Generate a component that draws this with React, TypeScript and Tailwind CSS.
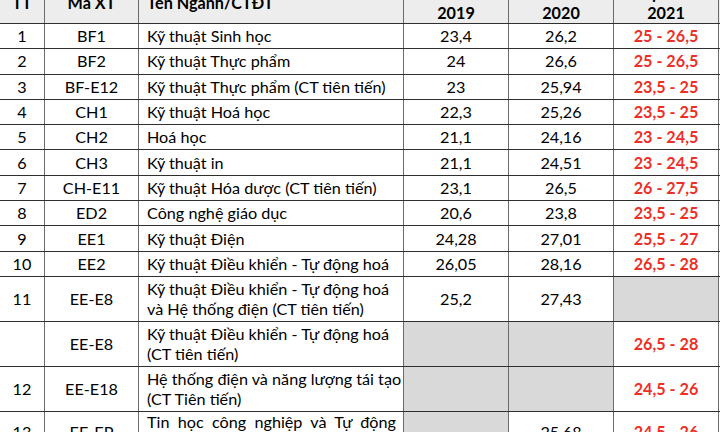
const rows = [
  { tt: "1", code: "BF1", name: ["Kỹ thuật Sinh học"], y19: "23,4", y20: "26,2", y21: "25 - 26,5" },
  { tt: "2", code: "BF2", name: ["Kỹ thuật Thực phẩm"], y19: "24", y20: "26,6", y21: "25 - 26,5" },
  { tt: "3", code: "BF-E12", name: ["Kỹ thuật Thực phẩm (CT tiên tiến)"], y19: "23", y20: "25,94", y21: "23,5 - 25" },
  { tt: "4", code: "CH1", name: ["Kỹ thuật Hoá học"], y19: "22,3", y20: "25,26", y21: "23,5 - 25" },
  { tt: "5", code: "CH2", name: ["Hoá học"], y19: "21,1", y20: "24,16", y21: "23 - 24,5" },
  { tt: "6", code: "CH3", name: ["Kỹ thuật in"], y19: "21,1", y20: "24,51", y21: "23 - 24,5" },
  { tt: "7", code: "CH-E11", name: ["Kỹ thuật Hóa dược (CT tiên tiến)"], y19: "23,1", y20: "26,5", y21: "26 - 27,5" },
  { tt: "8", code: "ED2", name: ["Công nghệ giáo dục"], y19: "20,6", y20: "23,8", y21: "23,5 - 25" },
  { tt: "9", code: "EE1", name: ["Kỹ thuật Điện"], y19: "24,28", y20: "27,01", y21: "25,5 - 27" },
  { tt: "10", code: "EE2", name: ["Kỹ thuật Điều khiển - Tự động hoá"], y19: "26,05", y20: "28,16", y21: "26,5 - 28" },
  {
    tt: "11",
    code: "EE-E8",
    name: ["Kỹ thuật Điều khiển - Tự động hoá", "và Hệ thống điện (CT tiên tiến)"],
    y19: "25,2",
    y20: "27,43",
    y21: null,
  },
  {
    tt: "",
    code: "EE-E8",
    name: ["Kỹ thuật Điều khiển - Tự động hoá", "(CT tiên tiến)"],
    y19: null,
    y20: null,
    y21: "26,5 - 28",
  },
  {
    tt: "12",
    code: "EE-E18",
    name: ["Hệ thống điện và năng lượng tái tạo", "(CT Tiên tiến)"],
    y19: null,
    y20: null,
    y21: "24,5 - 26",
  },
  {
    tt: "13",
    code: "EE-EP",
    name: ["Tin học công nghiệp và Tự động", "hoá (CT Việt-Pháp PFIEV)"],
    y19: null,
    y20: "25,68",
    y21: "24,5 - 26",
    justify: true,
  },
];

function Num({ value, red }: { value: string | null; red?: boolean }) {
  if (value === null) {
    return <div className="w-[105px] shrink-0 border-r border-[#6b6b6b] bg-[#d9d9d9]" />;
  }
  return (
    <div
      className={
        red
          ? "w-[105px] shrink-0 border-r border-[#6b6b6b] flex items-center justify-center font-bold text-[#ee2f27]"
          : "w-[105px] shrink-0 border-r border-[#6b6b6b] flex items-center justify-center"
      }
    >
      {value}
    </div>
  );
}

export default function App() {
  return (
    <div className="w-[720px] h-[432px] overflow-hidden bg-white font-[Lato,'Open_Sans',sans-serif] text-[16.2px] leading-[20px] text-black">
      <div className="-mt-[17px]">
        {/* header, top part is cut off in the shot */}
        <div className="flex h-[41px] border-b border-[#2f2f2f] bg-[#ededed] font-bold">
          <div className="w-[45px] shrink-0 border-r border-[#6b6b6b] flex items-center justify-center">TT</div>
          <div className="w-[94px] shrink-0 border-r border-[#6b6b6b] flex items-center justify-center">Mã XT</div>
          <div className="w-[265px] shrink-0 border-r border-[#6b6b6b] flex items-center pl-2">Tên Ngành/CTĐT</div>
          <div className="w-[105px] shrink-0 border-r border-[#6b6b6b] flex flex-col items-center justify-center">
            <span>Điểm chuẩn</span>
            <span>2019</span>
          </div>
          <div className="w-[105px] shrink-0 border-r border-[#6b6b6b] flex flex-col items-center justify-center">
            <span>Điểm chuẩn</span>
            <span>2020</span>
          </div>
          <div className="w-[105px] shrink-0 border-r border-[#6b6b6b] flex flex-col items-center justify-center">
            <span>Dự kiến</span>
            <span>2021</span>
          </div>
        </div>

        {rows.map((r, i) => (
          <div
            key={i}
            className={
              r.justify
                ? "flex h-[41px] border-b border-[#2f2f2f]"
                : r.name.length > 1
                ? "flex h-[45px] border-b border-[#2f2f2f]"
                : "flex h-[25.3px] border-b border-[#2f2f2f]"
            }
          >
            <div className="w-[45px] shrink-0 border-r border-[#6b6b6b] flex items-center justify-center">{r.tt}</div>
            <div className="w-[94px] shrink-0 border-r border-[#6b6b6b] flex items-center justify-center">{r.code}</div>
            <div className="w-[265px] shrink-0 border-r border-[#6b6b6b] flex flex-col justify-center pl-2 pr-[7px]">
              {r.name.map((line, j) =>
                r.justify && j === 0 ? (
                  <span key={j} className="block text-justify [text-align-last:justify]">
                    {line}
                  </span>
                ) : (
                  <span key={j} className="block whitespace-nowrap">
                    {line}
                  </span>
                )
              )}
            </div>
            <Num value={r.y19} />
            <Num value={r.y20} />
            <Num value={r.y21} red />
          </div>
        ))}
      </div>
    </div>
  );
}
